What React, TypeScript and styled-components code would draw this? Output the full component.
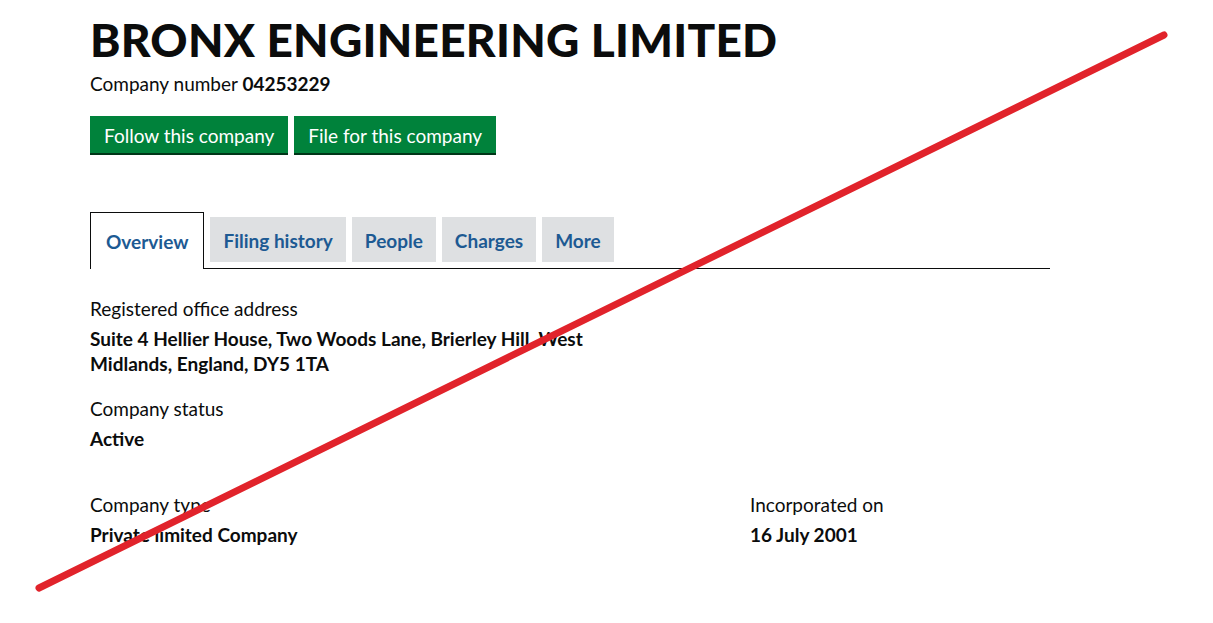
import React from 'react';
import styled, { createGlobalStyle } from 'styled-components';

const GlobalStyle = createGlobalStyle`
  html, body {
    margin: 0;
    padding: 0;
    background: #ffffff;
  }
  body {
    font-family: Lato, "Liberation Sans", sans-serif;
    color: #0b0c0c;
  }
`;

const Page = styled.div`
  position: relative;
  width: 1213px;
  height: 623px;
  overflow: hidden;
`;

const Container = styled.div`
  width: 960px;
  padding: 14px 0 0 90px;
`;

const Title = styled.h1`
  font-size: 46px;
  font-weight: 900;
  line-height: 52px;
  margin: 0;
  letter-spacing: 0.25px;
`;

const CompanyNumber = styled.p`
  font-size: 19px;
  margin: 5px 0 0;
  line-height: 25px;

  strong {
    font-weight: 700;
  }
`;

const ButtonRow = styled.div`
  display: flex;
  gap: 6px;
  margin-top: 20px;
`;

const Button = styled.a`
  display: inline-block;
  background: #00823b;
  color: #ffffff;
  font-size: 19px;
  line-height: 22px;
  padding: 9px 14px 6px;
  box-shadow: 0 2px 0 #003618;
  text-decoration: none;
  height: 22px;
`;

const TabList = styled.ul`
  display: flex;
  align-items: flex-end;
  gap: 6px;
  list-style: none;
  margin: 59px 0 0;
  padding: 0;
  border-bottom: 1px solid #0b0c0c;
`;

const Tab = styled.li<{ $active?: boolean }>`
  font-size: 19px;
  font-weight: 700;
  color: #1d5a93;
  padding: 0 ${(p) => (p.$active ? '15px' : '13px')};
  height: ${(p) => (p.$active ? '56px' : '45px')};
  line-height: ${(p) => (p.$active ? '58px' : '47px')};
  margin-bottom: ${(p) => (p.$active ? '-1px' : '6px')};
  background: ${(p) => (p.$active ? '#ffffff' : '#dee0e2')};
  border: ${(p) => (p.$active ? '1px solid #0b0c0c' : 'none')};
  border-bottom: none;
`;

const Details = styled.div`
  display: grid;
  grid-template-columns: 660px 1fr;
  margin-top: 27px;
`;

const Block = styled.dl<{ $span?: boolean; $gap: number }>`
  margin: 0 0 ${(p) => p.$gap}px;
  grid-column: ${(p) => (p.$span ? '1 / span 2' : 'auto')};
`;

const Label = styled.dt`
  font-size: 19px;
  line-height: 25px;
  color: #0b0c0c;
`;

const Value = styled.dd<{ $narrow?: boolean }>`
  margin: 5px 0 0;
  font-size: 19px;
  line-height: 25px;
  font-weight: 700;
  max-width: ${(p) => (p.$narrow ? '530px' : 'none')};
`;

const Strike = styled.svg`
  position: absolute;
  inset: 0;
  pointer-events: none;
`;

const App = () => {
  return (
    <Page>
      <GlobalStyle />
      <Container>
        <Title>BRONX ENGINEERING LIMITED</Title>
        <CompanyNumber>
          Company number <strong>04253229</strong>
        </CompanyNumber>
        <ButtonRow>
          <Button href="#">Follow this company</Button>
          <Button href="#">File for this company</Button>
        </ButtonRow>

        <TabList>
          <Tab $active>Overview</Tab>
          <Tab>Filing history</Tab>
          <Tab>People</Tab>
          <Tab>Charges</Tab>
          <Tab>More</Tab>
        </TabList>

        <Details>
          <Block $span $gap={20}>
            <Label>Registered office address</Label>
            <Value $narrow>Suite 4 Hellier House, Two Woods Lane, Brierley Hill, West Midlands, England, DY5 1TA</Value>
          </Block>
          <Block $span $gap={41}>
            <Label>Company status</Label>
            <Value>Active</Value>
          </Block>
          <Block $gap={0}>
            <Label>Company type</Label>
            <Value>Private limited Company</Value>
          </Block>
          <Block $gap={0}>
            <Label>Incorporated on</Label>
            <Value>16 July 2001</Value>
          </Block>
        </Details>
      </Container>

      {/* red strike-through drawn over the page */}
      <Strike width="1213" height="623" viewBox="0 0 1213 623">
        <line x1="39" y1="588" x2="1164" y2="35" stroke="#e1232b" strokeWidth="7" strokeLinecap="round" />
      </Strike>
    </Page>
  );
};

export default App;
